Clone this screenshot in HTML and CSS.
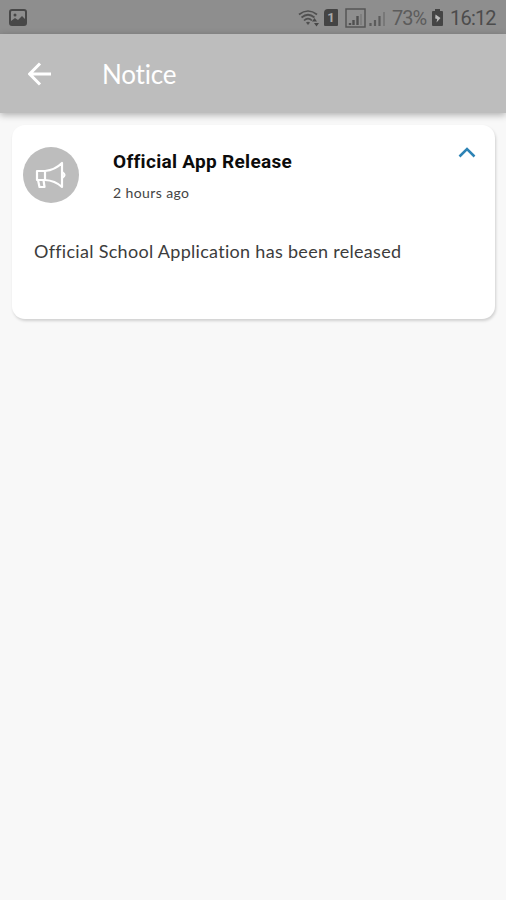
FILE: index.html
```html
<!DOCTYPE html>
<html lang="en">
<head>
    <meta charset="UTF-8">
    <meta name="viewport" content="width=device-width, initial-scale=1.0">
    <title>Notice</title>
    <link rel="stylesheet" href="styles.css">
</head>
<body>
    <div class="status-bar">
        <svg class="picture" width="18" height="17" viewBox="0 0 18 17">
            <rect x="1" y="1" width="16" height="15" rx="2" fill="none" stroke="#484848" stroke-width="2"/>
            <path d="M2 12l4-3 3 2 4-4 3 3v5H2z" fill="#484848"/>
            <circle cx="6" cy="6" r="1.5" fill="#484848"/>
        </svg>
        <div class="status-icons">
            <svg class="wifi" width="22" height="18" viewBox="0 0 22 18">
                <g fill="none" stroke="#505050" stroke-width="1.7">
                    <path d="M1 5.5Q10 -1.5 19 5.5M3.5 8.5Q10 3 16.5 8.5M6 11.5Q10 7.5 14 11.5"/>
                </g>
                <path d="M8 13.5Q10 12 12 13.5L10 16z" fill="#505050"/>
                <path d="M14 12.5l2.500-3.500 2.500 3.500zM16 14l2.500 3.500 2.500-3.500z" fill="#484848"/>
            </svg>
            <div class="sim">1</div>
            <svg class="signal-box" width="21" height="20" viewBox="0 0 21 20">
                <rect x="1" y="1" width="19" height="18" fill="none" stroke="#555" stroke-width="1.5"/>
                <path d="M5 15v2M8.5 12v5M12.500 8v9" stroke="#505050" stroke-width="2.4"/>
                <path d="M16 6v11" stroke="#7a7a7a" stroke-width="1.5"/>
            </svg>
            <svg class="signal" width="17" height="16" viewBox="0 0 17 16">
                <path d="M1.5 13v3M6 10v6M10.5 6v10" stroke="#5c5c5c" stroke-width="2.2"/>
                <path d="M15 2v14" stroke="#787878" stroke-width="2"/>
            </svg>
            <span class="percent">73%</span>
            <svg class="battery" width="11" height="17" viewBox="0 0 11 17">
                <path d="M3 0h5v2h2q1 0 1 1v13q0 1-1 1H1q-1 0-1-1V3q0-1 1-1h2z" fill="#454545"/>
                <path d="M3.5 5.5L8.5 9l-4 4.5.7-3.5-2-.5z" fill="#bbb"/>
            </svg>
            <span class="time">16:12</span>
        </div>
    </div>

    <div class="header">
        <svg class="back" width="24" height="24" viewBox="0 0 24 24">
            <path d="M23 12H2M12 1.5L1.7 12 12 22.5" fill="none" stroke="#fff" stroke-width="3"/>
        </svg>
        <h1>Notice</h1>
    </div>

    <div class="card">
        <div class="card-top">
            <div class="avatar">
                <svg width="32" height="28" viewBox="0 0 32 28">
                    <g fill="none" stroke="#fff" stroke-width="2.2" stroke-linejoin="round">
                        <path d="M2 10h8v9H2zM10 10Q20 9 27 2v24Q20 19.5 10 19M3 19l1.5 7h5L8.5 19"/>
                        <path d="M27.5 11.5q4 2.5 0 5"/>
                    </g>
                </svg>
            </div>
            <div class="card-title">
                <h2>Official App Release</h2>
                <div class="ago">2 hours ago</div>
            </div>
            <svg class="chevron" width="18" height="11" viewBox="0 0 18 11">
                <path d="M1.500 9.5L9 2l7.5 7.5" fill="none" stroke="#2d83b5" stroke-width="2.5"/>
            </svg>
        </div>
        <p class="message">Official School Application has been released</p>
    </div>
</body>
</html>
```

FILE: styles.css
```css
body {
    margin: 0;
    min-height: 900px;
    background-color: #f8f8f8;
    font-family: Lato, sans-serif;
}
.status-bar {
    display: flex;
    justify-content: space-between;
    height: 34px;
    background-color: #8e8e8e;
    box-sizing: border-box;
    padding: 0 10px 0 9px;
}
.picture {
    margin-top: 9px;
}
.status-icons {
    display: flex;
    align-items: center;
    height: 35px;
    font-family: Roboto, sans-serif;
    font-size: 20px;
    color: #4c4c4c;
}
.sim {
    width: 14px;
    height: 17px;
    margin: 0 7px 0 4px;
    border-radius: 4px 1px 1px 1px;
    background-color: #444;
    color: #aaa;
    font-size: 13px;
    font-weight: bold;
    line-height: 17px;
    text-align: center;
}
.signal {
    margin: 0 6px 0 3px;
}
.percent {
    width: 35px;
    letter-spacing: -1px;
    color: #5c5c5c;
}
.battery {
    margin: 0 7px 0 5px;
}
.time {
    width: 46px;
    letter-spacing: -0.8px;
}
.header {
    display: flex;
    align-items: center;
    height: 79px;
    padding-left: 28px;
    background-color: #bdbdbd;
    box-shadow: 0 2px 7px rgba(0, 0, 0, 0.3);
}
h1 {
    margin: 0 0 0 50px;
    color: #fff;
    font-size: 26px;
    font-weight: normal;
    letter-spacing: -0.2px;
}
.card {
    height: 194px;
    margin: 12px 11px 0 12px;
    border-radius: 13px;
    background-color: #fff;
    box-shadow: 1px 2px 3px rgba(0, 0, 0, 0.16);
}
.card-top {
    display: flex;
    height: 100px;
}
.avatar {
    display: flex;
    align-items: center;
    justify-content: center;
    width: 56px;
    height: 56px;
    margin: 22px 0 0 11px;
    border-radius: 50%;
    background-color: #bdbdbd;
}
.card-title {
    flex: 1;
    padding: 25px 0 0 34px;
}
h2 {
    margin: 0;
    color: #0c0c0c;
    font-family: Roboto, sans-serif;
    font-size: 19px;
    font-weight: bold;
    line-height: 24px;
    letter-spacing: 0.3px;
}
.ago {
    margin-top: 9px;
    color: #444;
    font-size: 14px;
    line-height: 20px;
    letter-spacing: 0.4px;
}
.chevron {
    margin: 22px 19px 0 0;
}
.message {
    margin: 13px 0 0 22px;
    color: #3c3c3c;
    font-size: 18px;
    line-height: 26px;
    letter-spacing: 0.3px;
    white-space: nowrap;
}
```
